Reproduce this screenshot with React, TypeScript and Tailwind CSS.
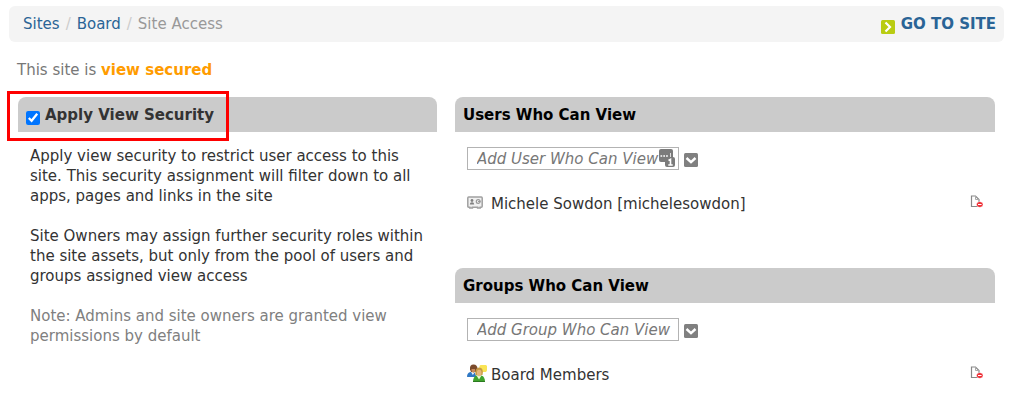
import type { ReactNode } from "react";

function ArrowIcon() {
  return (
    <svg width="14" height="14" viewBox="0 0 14 14" aria-hidden="true">
      <rect width="14" height="14" rx="1.5" fill="#b9cc12" />
      <path d="M4.500 2.500L9 7l-4.500 4.500" fill="none" stroke="#fff" strokeWidth="2.200" />
    </svg>
  );
}

function ChevronIcon() {
  return (
    <svg width="14" height="14" viewBox="0 0 14 14" aria-hidden="true">
      <rect width="14" height="14" rx="1.5" fill="#808080" />
      <path d="M2.500 5L7 9.200 11.500 5" fill="none" stroke="#fff" strokeWidth="2.400" />
    </svg>
  );
}

function AutofillIcon() {
  return (
    <svg width="16" height="18" viewBox="0 0 16 18" aria-hidden="true">
      <rect width="14" height="13" rx="2" fill="#7b7b7b" />
      <path d="M1.500 7h1.700M4.300 7H6M7.100 7h1.700" stroke="#fff" strokeWidth="1.600" />
      <path d="M11.500 4v4" stroke="#ddd" strokeWidth="1" />
      <rect x="6" y="8" width="10" height="10" rx="2" fill="#7b7b7b" />
      <path d="M9.500 11.500l2-1.200v5.700M9.300 16h4.400" fill="none" stroke="#fff" strokeWidth="1.600" />
    </svg>
  );
}

function CardIcon() {
  return (
    <svg width="16" height="13" viewBox="0 0 16 13" aria-hidden="true">
      <path
        d="M1.7 1h12.6q.9 0 .9.9v8.4q0 .9-.9.9h-1.1v.9h-2.6v-.9H5.4v.9H2.8v-.9H1.7q-.9 0-.9-.9V1.900q0-.9.9-.9z"
        fill="#f0f0f0"
        stroke="#a0a0a0"
        strokeWidth="1.500"
      />
      <circle cx="5" cy="4.500" r="1.400" fill="#808080" />
      <path d="M2.800 8.500q0-2.300 2.200-2.300t2.200 2.300z" fill="#808080" />
      <circle cx="11.200" cy="5.500" r="1.900" fill="none" stroke="#999" strokeWidth="1.200" />
      <path d="M11 5.500h2.500" stroke="#999" />
    </svg>
  );
}

function GroupIcon() {
  return (
    <svg width="20" height="19" viewBox="0 0 20 19" aria-hidden="true">
      <path d="M12.500 2l1-1H19l1 1v4.500l-1 1.500h-3l-1.500 1-2-3z" fill="#fae455" />
      <path d="M0 12.500Q.2 8.500 3.500 8h4l2 5H.3z" fill="#2f78c4" />
      <path d="M4 8l1.800 3L8 8z" fill="#e8f1fb" />
      <path d="M3 5.500Q2.500.5 6.500.5t4 4.500L9 8H4z" fill="#7b4a2b" />
      <path d="M4.500 5h3.500v2.500L6.300 9 4.500 7.200z" fill="#c98a5c" />
      <path d="M6 18q0-5.500 3.500-6.500h5q3.500 1 3.500 6.500z" fill="#3fa32d" />
      <path d="M9.500 11.500l2.500 4 2.500-4z" fill="#e9f7d8" />
      <path d="M8.500 11q-1-7.500 3.700-7.500T15.500 11z" fill="#c79a45" />
      <ellipse cx="12.200" cy="9" rx="2.300" ry="3.200" fill="#e6b77a" />
      <path d="M6 17.500h12" stroke="#2b7a20" />
    </svg>
  );
}

function RemoveIcon() {
  return (
    <svg width="13" height="13" viewBox="0 0 13 13" aria-hidden="true">
      <path d="M1.500 1h4L9 4.500V11.500H1.500z" fill="#fff" stroke="#888" strokeWidth="1.200" />
      <path d="M5.500 1v3.500H9" fill="none" stroke="#aaa" />
      <ellipse cx="9.800" cy="9.500" rx="3.200" ry="2.800" fill="#ed1c24" stroke="#fff" strokeWidth=".5" />
      <path d="M8 9.500h3.600" stroke="#fff" strokeWidth="1.200" />
    </svg>
  );
}

function PanelHeader({ children }: { children: ReactNode }) {
  return (
    <div className="flex h-[35px] items-center rounded-t-lg bg-[#cbcbcb] px-2 font-bold">
      {children}
    </div>
  );
}

type AccessPanelProps = {
  title: string;
  placeholder: string;
  member: string;
  icon: ReactNode;
  autofill?: boolean;
};

function AccessPanel({ title, placeholder, member, icon, autofill }: AccessPanelProps) {
  return (
    <section>
      <PanelHeader>
        <h2 className="text-black">{title}</h2>
      </PanelHeader>
      <div className="px-3 pt-[15px]">
        <div className="flex items-end gap-[5px]">
          <div className="relative">
            <input
              type="text"
              aria-label={placeholder}
              placeholder={placeholder}
              className="block h-[23px] w-[212px] border border-[#b3b3b3] bg-white pl-[9px] text-[15px] italic placeholder:text-[#777]"
            />
            {autofill && (
              <span className="absolute top-[2px] right-1">
                <AutofillIcon />
              </span>
            )}
          </div>
          <button type="button" aria-label={`Browse: ${title}`} className="pb-[3px]">
            <ChevronIcon />
          </button>
        </div>
        <div className="mt-6 flex h-5 items-center justify-between">
          <div className="flex items-center gap-1">
            <span className="flex w-5 pb-1">{icon}</span>
            <span>{member}</span>
          </div>
          <button type="button" aria-label={`Remove ${member}`} className="pb-[6px]">
            <RemoveIcon />
          </button>
        </div>
      </div>
    </section>
  );
}

export default function App() {
  return (
    <main className="bg-white px-[9px] pt-[6px] pb-4 font-['DejaVu_Sans',Verdana,sans-serif] text-[15px] leading-5 text-[#333]">
      <header className="mr-[5px] flex h-9 items-center justify-between rounded-md bg-[#f4f4f4] pr-2 pl-[14px]">
        <nav aria-label="Breadcrumb" className="flex gap-[6px] text-[#999]">
          <a href="#sites" className="text-[#2a6496]">Sites</a>
          <span className="text-[#ccc]">/</span>
          <a href="#board" className="text-[#2a6496]">Board</a>
          <span className="text-[#ccc]">/</span>
          <span>Site Access</span>
        </nav>
        <a href="#site" className="flex items-end gap-[6px] font-bold text-[#2a6496]">
          <ArrowIcon />
          GO TO SITE
        </a>
      </header>

      <p className="mt-[18px] pl-2 text-[#777]">
        This site is <strong className="font-bold text-[#ff9c00]">view secured</strong>
      </p>

      <div className="mt-[17px] mr-[14px] ml-[9px] grid grid-cols-[419fr_540fr] gap-[18px]">
        <section className="relative">
          <PanelHeader>
            <label className="flex items-end gap-[5px]">
              <input type="checkbox" defaultChecked className="h-[14px] w-[14px] accent-[#0075ff]" />
              Apply View Security
            </label>
          </PanelHeader>
          <div className="pointer-events-none absolute -top-[6px] -left-[11px] h-[50px] w-[222px] border-3 border-[#fe0000]" />
          <div className="space-y-5 pt-[14px] pr-2 pl-3">
            <p>
              Apply view security to restrict user access to this site. This security assignment will
              filter down to all apps, pages and links in the site
            </p>
            <p>
              Site Owners may assign further security roles within the site assets, but only from the
              pool of users and groups assigned view access
            </p>
            <p className="text-[#808080]">
              Note: Admins and site owners are granted view permissions by default
            </p>
          </div>
        </section>

        <div className="space-y-[54px]">
          <AccessPanel
            title="Users Who Can View"
            placeholder="Add User Who Can View"
            member="Michele Sowdon [michelesowdon]"
            icon={<CardIcon />}
            autofill
          />
          <AccessPanel
            title="Groups Who Can View"
            placeholder="Add Group Who Can View"
            member="Board Members"
            icon={<GroupIcon />}
          />
        </div>
      </div>
    </main>
  );
}
